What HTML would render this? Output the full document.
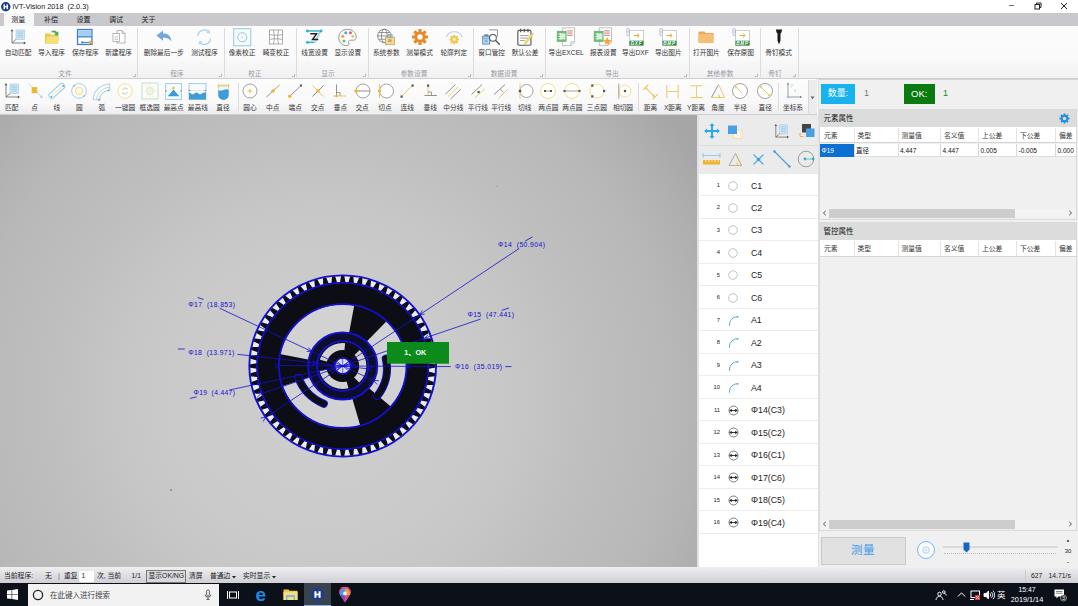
<!DOCTYPE html><html><head><meta charset="utf-8"><title>iVT-Vision 2018</title><style>
*{box-sizing:border-box;margin:0;padding:0}
html,body{width:1078px;height:606px;overflow:hidden;background:#fff}
body{position:relative;font-family:"Liberation Sans","Noto Sans CJK SC",sans-serif;font-size:7px;color:#222}
.abs{position:absolute}
.t{position:absolute;white-space:nowrap;line-height:1}
.c{transform:translateX(-50%)}
#title{left:0;top:0;width:1078px;height:13px;background:#fff}
#tabs{left:0;top:13px;width:1078px;height:13px;background:#c9c9cd}
#ribbon{left:0;top:26px;width:1078px;height:53px;background:linear-gradient(#fcfcfc,#fafafa 60%,#f1f1f3);border-bottom:1px solid #cdcdd1}
#tb2{left:0;top:79px;width:817px;height:36px;background:linear-gradient(#fdfdfd,#f8f8f9 70%,#ededf0);border-bottom:1px solid #cfcfd3;border-right:1px solid #d8d8dc}
#img{left:0;top:115px;width:697px;height:452px;overflow:hidden;background:#c6c6c6}
#lp{left:697px;top:115px;width:121px;height:452px;background:#fff;border-left:2px solid #e2e2e2}
#rp{left:818px;top:79px;width:260px;height:488px;background:#f0f0f0;border-top:1px solid #d4d4d4;border-left:1px solid #e0e0e0}
#status{left:0;top:567px;width:1078px;height:16px;background:linear-gradient(#f0f0f0,#e2e2e6 40%,#cfcfd5)}
#task{left:0;top:583px;width:1078px;height:23px;background:#0b1019}
.rl{font-size:6.7px;color:#333;top:50.3px}
.gl{font-size:6.7px;color:#9a9aa0;top:70.5px}
.sep{position:absolute;width:1px;background:#dcdce0}
.l2{font-size:6.7px;color:#333;top:105.2px}
.li{position:absolute;left:0;width:119px;height:22.47px;border-bottom:1px solid #ececec}
.li .n{position:absolute;font-size:5.800px;color:#222;top:8px;right:98px}
.li .nm{position:absolute;font-size:8.800px;color:#222;left:52px;top:6.500px}
.th{font-size:7px;color:#222}
</style></head><body>
<div id="title" class="abs">
<svg class="abs" style="left:1px;top:2px" width="9.500" height="9.500" viewBox="0 0 10 10"><circle cx="5" cy="5" r="5" fill="#1d3c8c"/><rect x="2.6" y="2.5" width="1.6" height="5" fill="#fff"/><rect x="5.8" y="2.5" width="1.6" height="5" fill="#fff"/><rect x="3.5" y="4.3" width="3" height="1.3" fill="#fff"/></svg>
<span class="t" style="left:12.500px;top:2.800px;font-size:7.300px;color:#111">iVT-Vision 2018&nbsp; (2.0.3)</span>
<span class="t" style="left:1009px;top:1px;font-size:9px;color:#222">–</span>
<svg class="abs" style="left:1034px;top:2px" width="8" height="8" viewBox="0 0 8 8" fill="none" stroke="#222" stroke-width="1"><rect x="1" y="2.5" width="4.5" height="4.5"/><path d="M2.5 2.5V1H7V5.5H5.5"/></svg>
<svg class="abs" style="left:1060px;top:2px" width="8" height="8" viewBox="0 0 8 8" stroke="#222" stroke-width="1"><path d="M1 1L7 7M7 1L1 7"/></svg>
</div>
<div id="tabs" class="abs">
<div class="abs" style="left:4px;top:0;width:29.500px;height:13px;background:#f7f7f8"></div>
<span class="t c" style="left:18.3px;top:3.200px;font-size:7px;color:#222">测量</span>
<span class="t c" style="left:51.0px;top:3.200px;font-size:7px;color:#222">补偿</span>
<span class="t c" style="left:83.5px;top:3.200px;font-size:7px;color:#222">设置</span>
<span class="t c" style="left:116.0px;top:3.200px;font-size:7px;color:#222">调试</span>
<span class="t c" style="left:148.4px;top:3.200px;font-size:7px;color:#222">关于</span>
</div>
<div id="ribbon" class="abs"></div>
<span class="t c rl" style="left:18.0px">自动匹配</span>
<svg class="abs" style="left:9.0px;top:28.2px" width="18.0" height="18.0" viewBox="0 0 18 18"><rect x="7" y="2" width="8.5" height="9.5" fill="#cfe6f4" stroke="#9cc7e4" stroke-width=".6"/>
<path d="M8.5 4h5.5M8.5 5.7h5.5M8.5 7.4h5.5M8.5 9.1h5.5" stroke="#8fbfe0" stroke-width=".6"/>
<path d="M3 2.5V15H15.5M3 15L7 11.5" stroke="#666" stroke-width=".8" fill="none"/>
<path d="M3 1l1.4 2.2H1.6zM17 15l-2.2 1.4v-2.8z" fill="#555"/></svg>
<span class="t c rl" style="left:51.5px">导入程序</span>
<svg class="abs" style="left:42.5px;top:28.2px" width="18.0" height="18.0" viewBox="0 0 18 18"><path d="M2 5.5h5l1.2 1.3H15V16H2z" fill="#e9c94a"/>
<path d="M2 16L4 8.5h12.5L15 16z" fill="#f6e07a"/>
<path d="M7.5 4.5C9 2 12.5 1.8 14 4.2l1.2-1 .3 4.6-4.4-1 1.3-1C11.5 4 9.5 4 7.500 4.5z" fill="#4caf50"/></svg>
<span class="t c rl" style="left:85.3px">保存程序</span>
<svg class="abs" style="left:76.0px;top:28.0px" width="18.5" height="18.5" viewBox="0 0 18 18"><rect x="1.5" y="1.5" width="14" height="14.500" fill="#fff" stroke="#3f7fc4" stroke-width="1.3"/>
<rect x="2.2" y="2.200" width="12.6" height="6" fill="#a9cdf1"/>
<path d="M1.5 8.6h14" stroke="#3f7fc4" stroke-width="1.2"/>
<path d="M6 14h7" stroke="#3f7fc4" stroke-width="1"/>
<circle cx="6" cy="14" r="1" fill="#3f7fc4"/>
<path d="M13 11.800l4 2.200-4 2.200z" fill="#f0a030"/></svg>
<span class="t c rl" style="left:118.5px">新建程序</span>
<svg class="abs" style="left:109.5px;top:28.2px" width="18.0" height="18.0" viewBox="0 0 18 18"><path d="M7 2.500h5l3 3V15H7z" fill="#fff" stroke="#9a9a9a" stroke-width=".7"/>
<path d="M12 2.500v3h3" fill="none" stroke="#9a9a9a" stroke-width=".7"/>
<rect x="3" y="5.500" width="6.500" height="8" fill="#fff" stroke="#9a9a9a" stroke-width=".7"/>
<path d="M4.500 8.500h3.500M4.500 10h3.500M4.500 11.500h3.500" stroke="#b5b5b5" stroke-width=".6"/></svg>
<span class="t c rl" style="left:163.8px">删除最后一步</span>
<svg class="abs" style="left:154.8px;top:28.2px" width="18.0" height="18.0" viewBox="0 0 18 18"><path d="M1.500 7.500L8 2.500v3c5 0 8 2.500 8.500 8-1.800-3-4.500-4-8.500-3.800v3z" fill="#6fa8dc"/></svg>
<span class="t c rl" style="left:204.5px">测试程序</span>
<svg class="abs" style="left:194.2px;top:27.0px" width="20.5" height="20.5" viewBox="0 0 18 18"><path d="M3.500 8a5.500 5.500 0 0 1 9.500-3.600" fill="none" stroke="#a3d5ee" stroke-width="1.100"/><path d="M14.500 10a5.500 5.500 0 0 1-9.500 3.600" fill="none" stroke="#a3d5ee" stroke-width="1.100"/>
<path d="M13.800 2.200v3.200h-3.200zM4.200 15.800v-3.200h3.200z" fill="#a3d5ee"/></svg>
<span class="t c rl" style="left:242.0px">像素校正</span>
<svg class="abs" style="left:231.8px;top:27.0px" width="20.5" height="20.5" viewBox="0 0 18 18"><rect x="1.500" y="1.500" width="15" height="15" fill="#f4fafd" stroke="#8cc4dc" stroke-width=".8"/><circle cx="9" cy="9" r="4" fill="none" stroke="#8cc4dc" stroke-width=".8"/><circle cx="9" cy="9" r=".8" fill="#f2d98a"/></svg>
<span class="t c rl" style="left:276.0px">畸变校正</span>
<svg class="abs" style="left:267.0px;top:28.2px" width="18.0" height="18.0" viewBox="0 0 18 18"><rect x="2.500" y="2" width="13" height="14" fill="#fff" stroke="#8a8a8a" stroke-width=".7"/>
<path d="M6.500 2C7.500 6 7.500 12 6.500 16M11.500 2C10.500 6 10.500 12 11.500 16M2.500 6.500C6 7.500 12 7.500 15.500 6.500M2.500 11.500C6 10.500 12 10.500 15.500 11.500" fill="none" stroke="#8a8a8a" stroke-width=".7"/></svg>
<span class="t c rl" style="left:314.6px">线宽设置</span>
<svg class="abs" style="left:304.4px;top:27.0px" width="20.5" height="20.5" viewBox="0 0 18 18"><path d="M3 3.500H14.500" stroke="#2fb5c8" stroke-width="1.300"/><path d="M14.500 3.500L9.500 13.500" stroke="#9ad8e4" stroke-width="1.600"/><path d="M3.500 13.500H9" stroke="#2fb5c8" stroke-width="1.300"/>
<path d="M5.500 6h5.500l-3.500 5h5" fill="none" stroke="#222" stroke-width="1.300"/>
<circle cx="3" cy="3.500" r="1.300" fill="#2fb5c8"/><circle cx="15" cy="3.500" r="1.300" fill="#2fb5c8"/><circle cx="3" cy="13.500" r="1.300" fill="#2fb5c8"/></svg>
<span class="t c rl" style="left:347.8px">显示设置</span>
<svg class="abs" style="left:337.3px;top:26.7px" width="21.0" height="21.0" viewBox="0 0 18 18"><path d="M9 2C4.500 2 1.500 5 1.500 9s3 7 7 7c2 0 2-1.500 1.500-2.500-.5-1.200.3-2.200 1.700-2.200h2.300c1.500 0 2.500-1 2.500-2.800C16.500 4.500 13 2 9 2z" fill="#fbfbfb" stroke="#8a8f98" stroke-width=".8"/>
<circle cx="5" cy="8" r="1.300" fill="#e8a33d"/><circle cx="7.500" cy="5" r="1.300" fill="#5aa2e0"/><circle cx="11.500" cy="5" r="1.300" fill="#e06060"/><circle cx="13.500" cy="8" r="1.200" fill="#e8c04a"/><circle cx="6" cy="12" r="1.300" fill="#6cc070"/></svg>
<span class="t c rl" style="left:386.3px">系统参数</span>
<svg class="abs" style="left:376.3px;top:27.2px" width="20.0" height="20.0" viewBox="0 0 18 18"><circle cx="7.500" cy="8" r="6" fill="#fff" stroke="#777" stroke-width=".8"/><ellipse cx="7.500" cy="8" rx="2.600" ry="6" fill="none" stroke="#777" stroke-width=".7"/><path d="M1.500 8h12M2.500 5h10M2.500 11h10" stroke="#777" stroke-width=".7"/>
<rect x="8.500" y="9" width="8" height="7" fill="#ecd9a0" stroke="#b59a55" stroke-width=".6"/><rect x="10.500" y="6.800" width="4" height="2.600" fill="none" stroke="#8fa6c8" stroke-width=".8"/><rect x="11" y="11" width="3" height="2.500" fill="#c9a94e"/></svg>
<span class="t c rl" style="left:419.6px">测量模式</span>
<svg class="abs" style="left:410.6px;top:28.2px" width="18.0" height="18.0" viewBox="0 0 18 18"><g fill="#e8892b"><circle cx="9" cy="9" r="5.600"/><g id="gt"><rect x="7.400" y="1" width="3.200" height="16" rx=".5"/></g><rect x="7.400" y="1" width="3.200" height="16" rx=".5" transform="rotate(45 9 9)"/><rect x="7.400" y="1" width="3.200" height="16" rx=".5" transform="rotate(90 9 9)"/><rect x="7.400" y="1" width="3.200" height="16" rx=".5" transform="rotate(135 9 9)"/></g><circle cx="9" cy="9" r="2.700" fill="#fafafa"/></svg>
<span class="t c rl" style="left:453.8px">轮廓判定</span>
<svg class="abs" style="left:443.6px;top:27.0px" width="20.5" height="20.5" viewBox="0 0 18 18"><path d="M2 9A7.500 7.500 0 0 1 16 9" fill="none" stroke="#a8d4ea" stroke-width=".9"/>
<g fill="#f2c84b"><circle cx="9" cy="11" r="3"/><rect x="8.100" y="6.800" width="1.800" height="8.400"/><rect x="8.100" y="6.800" width="1.800" height="8.400" transform="rotate(45 9 11)"/><rect x="8.100" y="6.800" width="1.800" height="8.400" transform="rotate(90 9 11)"/><rect x="8.100" y="6.800" width="1.800" height="8.400" transform="rotate(135 9 11)"/></g><circle cx="9" cy="11" r="1.300" fill="#fafafa"/></svg>
<span class="t c rl" style="left:491.7px">窗口管控</span>
<svg class="abs" style="left:481.4px;top:27.0px" width="20.5" height="20.5" viewBox="0 0 18 18"><path d="M7 2.500h7.500v6" fill="none" stroke="#8a8a8a" stroke-width=".8"/>
<rect x="1.500" y="8" width="6" height="7" fill="#cfe4f4" stroke="#4a86b8" stroke-width=".8"/><path d="M1.500 9.800h6M3 11.500h3M3 13h3" stroke="#4a86b8" stroke-width=".7"/><rect x="3" y="6.500" width="3.500" height="1.500" fill="#4a86b8"/>
<circle cx="10.500" cy="9.500" r="3" fill="#fff" stroke="#555" stroke-width=".9"/><path d="M12.700 11.700L16.500 15.500" stroke="#555" stroke-width="1.200"/></svg>
<span class="t c rl" style="left:525.0px">默认公差</span>
<svg class="abs" style="left:514.8px;top:27.0px" width="20.5" height="20.5" viewBox="0 0 18 18"><rect x="2.500" y="3" width="11.500" height="13" rx="1" fill="#fff" stroke="#555" stroke-width="1"/>
<path d="M5 1.500v3M8.200 1.500v3M11.400 1.500v3" stroke="#555" stroke-width="1"/><path d="M4.500 7.500h7.500M4.500 9.700h7.500M4.500 11.900h4" stroke="#888" stroke-width=".7"/>
<path d="M16.500 6L10 14.500l-2 1 .6-2.200L15.200 5z" fill="#f0d878" stroke="#d8b84a" stroke-width=".4"/></svg>
<span class="t c rl" style="left:566.2px">导出EXCEL</span>
<svg class="abs" style="left:555.2px;top:26.2px" width="22.0" height="22.0" viewBox="0 0 18 18"><path d="M6 1.500h10V13l-3 3H6z" fill="#fff" stroke="#aaa" stroke-width=".6"/><path d="M16 13h-3v3" fill="none" stroke="#aaa" stroke-width=".6"/>
<path d="M10 4h4.500M10 5.800h4.500M10 7.600h4.500" stroke="#c05a5a" stroke-width=".7"/>
<rect x="1.500" y="4" width="8" height="9" fill="#6dbb78"/><rect x="4" y="6" width="4.500" height="5" fill="#d8efd8"/><path d="M3 6.500h2M3 8.500h2M3 10.500h2" stroke="#fff" stroke-width=".8"/></svg>
<span class="t c rl" style="left:603.3px">报表设置</span>
<svg class="abs" style="left:592.3px;top:26.2px" width="22.0" height="22.0" viewBox="0 0 18 18"><path d="M6 1.500h10V13l-3 3H6z" fill="#fff" stroke="#aaa" stroke-width=".6"/><path d="M16 13h-3v3" fill="none" stroke="#aaa" stroke-width=".6"/>
<path d="M10 4h4.500M10 5.800h4.500M10 7.600h4.500" stroke="#c05a5a" stroke-width=".7"/>
<rect x="1.500" y="4" width="8" height="9" fill="#6dbb78"/><rect x="4" y="6" width="4.500" height="5" fill="#d8efd8"/><path d="M3 6.500h2M3 8.500h2M3 10.500h2" stroke="#fff" stroke-width=".8"/><path d="M12.500 9l1 2.300 2.500.2-1.900 1.600.6 2.400-2.200-1.300-2.200 1.300.6-2.400-1.900-1.600 2.500-.2z" fill="#f0a832"/></svg>
<span class="t c rl" style="left:635.4px">导出DXF</span>
<svg class="abs" style="left:626.4px;top:28.2px" width="18.0" height="18.0" viewBox="0 0 18 18"><rect x="3.500" y="2.500" width="14" height="15" fill="#fff" stroke="#b0b0b0" stroke-width=".6"/>
<rect x=".800" y=".400" width="2.600" height="7.200" rx="1.300" fill="#fff" stroke="#8aa0c0" stroke-width=".6"/><path d="M2.100 2v3.500" stroke="#8aa0c0" stroke-width=".5"/>
<path d="M7.500 7.500h5.500M11 5.500L13.200 7.500 11 9.500" fill="none" stroke="#e8b03a" stroke-width="1"/>
<rect x="3.500" y="12.700" width="14" height="4.800" fill="#2a8a3a"/>
<text x="10.500" y="16.700" font-size="4.600" font-weight="bold" font-style="italic" fill="#fff" text-anchor="middle" font-family="Liberation Sans,sans-serif" letter-spacing=".7">DXF</text></svg>
<span class="t c rl" style="left:668.3px">导出图片</span>
<svg class="abs" style="left:659.3px;top:28.2px" width="18.0" height="18.0" viewBox="0 0 18 18"><rect x="3.500" y="2.500" width="14" height="15" fill="#fff" stroke="#b0b0b0" stroke-width=".6"/>
<rect x=".800" y=".400" width="2.600" height="7.200" rx="1.300" fill="#fff" stroke="#8aa0c0" stroke-width=".6"/><path d="M2.100 2v3.500" stroke="#8aa0c0" stroke-width=".5"/>
<path d="M7.500 7.500h5.500M11 5.500L13.200 7.500 11 9.500" fill="none" stroke="#e8b03a" stroke-width="1"/>
<rect x="3.500" y="12.700" width="14" height="4.800" fill="#2a8a3a"/>
<text x="10.500" y="16.700" font-size="4.600" font-weight="bold" font-style="italic" fill="#fff" text-anchor="middle" font-family="Liberation Sans,sans-serif" letter-spacing=".7">BMP</text></svg>
<span class="t c rl" style="left:706.4px">打开图片</span>
<svg class="abs" style="left:697.4px;top:28.2px" width="18.0" height="18.0" viewBox="0 0 18 18"><path d="M1.500 3.500h6l1.200 1.500H16.500V15H1.500z" fill="#e9a85a"/><path d="M1.500 6h15v9H1.500z" fill="#f5bf78"/></svg>
<span class="t c rl" style="left:740.6px">保存原图</span>
<svg class="abs" style="left:731.6px;top:28.2px" width="18.0" height="18.0" viewBox="0 0 18 18"><rect x="3.500" y="2.500" width="14" height="15" fill="#fff" stroke="#b0b0b0" stroke-width=".6"/>
<rect x=".800" y=".400" width="2.600" height="7.200" rx="1.300" fill="#fff" stroke="#8aa0c0" stroke-width=".6"/><path d="M2.100 2v3.500" stroke="#8aa0c0" stroke-width=".5"/>
<path d="M7.500 7.500h5.500M11 5.500L13.200 7.500 11 9.500" fill="none" stroke="#e8b03a" stroke-width="1"/>
<rect x="3.500" y="12.700" width="14" height="4.800" fill="#2a8a3a"/>
<text x="10.500" y="16.700" font-size="4.600" font-weight="bold" font-style="italic" fill="#fff" text-anchor="middle" font-family="Liberation Sans,sans-serif" letter-spacing=".7">BMP</text></svg>
<span class="t c rl" style="left:778.6px">骨钉模式</span>
<svg class="abs" style="left:769.6px;top:28.2px" width="18.0" height="18.0" viewBox="0 0 18 18"><path d="M5.800 1.500h6.400l-.9 3.200-.8.900V12.500l-1.500 4L7.500 12.500V5.600l-.8-.9z" fill="#1a1a1a"/></svg>
<div class="sep" style="left:137.0px;top:28px;height:49px"></div>
<div class="sep" style="left:223.5px;top:28px;height:49px"></div>
<div class="sep" style="left:296.4px;top:28px;height:49px"></div>
<div class="sep" style="left:367.6px;top:28px;height:49px"></div>
<div class="sep" style="left:472.5px;top:28px;height:49px"></div>
<div class="sep" style="left:544.5px;top:28px;height:49px"></div>
<div class="sep" style="left:688.5px;top:28px;height:49px"></div>
<div class="sep" style="left:759.7px;top:28px;height:49px"></div>
<div class="sep" style="left:797.5px;top:28px;height:49px"></div>
<svg class="abs" style="left:131.5px;top:73px" width="4" height="4" viewBox="0 0 4 4"><path d="M3.500 1v2.500H1" fill="none" stroke="#a0a0a8" stroke-width=".7"/></svg>
<svg class="abs" style="left:218.0px;top:73px" width="4" height="4" viewBox="0 0 4 4"><path d="M3.500 1v2.500H1" fill="none" stroke="#a0a0a8" stroke-width=".7"/></svg>
<svg class="abs" style="left:290.9px;top:73px" width="4" height="4" viewBox="0 0 4 4"><path d="M3.500 1v2.500H1" fill="none" stroke="#a0a0a8" stroke-width=".7"/></svg>
<svg class="abs" style="left:362.1px;top:73px" width="4" height="4" viewBox="0 0 4 4"><path d="M3.500 1v2.500H1" fill="none" stroke="#a0a0a8" stroke-width=".7"/></svg>
<svg class="abs" style="left:467.0px;top:73px" width="4" height="4" viewBox="0 0 4 4"><path d="M3.500 1v2.500H1" fill="none" stroke="#a0a0a8" stroke-width=".7"/></svg>
<svg class="abs" style="left:539.0px;top:73px" width="4" height="4" viewBox="0 0 4 4"><path d="M3.500 1v2.500H1" fill="none" stroke="#a0a0a8" stroke-width=".7"/></svg>
<svg class="abs" style="left:683.0px;top:73px" width="4" height="4" viewBox="0 0 4 4"><path d="M3.500 1v2.500H1" fill="none" stroke="#a0a0a8" stroke-width=".7"/></svg>
<svg class="abs" style="left:754.2px;top:73px" width="4" height="4" viewBox="0 0 4 4"><path d="M3.500 1v2.500H1" fill="none" stroke="#a0a0a8" stroke-width=".7"/></svg>
<svg class="abs" style="left:792.0px;top:73px" width="4" height="4" viewBox="0 0 4 4"><path d="M3.500 1v2.500H1" fill="none" stroke="#a0a0a8" stroke-width=".7"/></svg>
<span class="t c gl" style="left:65px">文件</span>
<span class="t c gl" style="left:177px">程序</span>
<span class="t c gl" style="left:255px">校正</span>
<span class="t c gl" style="left:328px">显示</span>
<span class="t c gl" style="left:414px">参数设置</span>
<span class="t c gl" style="left:504px">数据设置</span>
<span class="t c gl" style="left:612px">导出</span>
<span class="t c gl" style="left:720px">其他参数</span>
<span class="t c gl" style="left:775px">骨钉</span>
<div id="tb2" class="abs"></div>
<span class="t c l2" style="left:11.8px">匹配</span>
<svg class="abs" style="left:2.8px;top:82.2px" width="18.0" height="18.0" viewBox="0 0 18 18"><rect x="7" y="2" width="8.5" height="9.5" fill="#cfe6f4" stroke="#9cc7e4" stroke-width=".6"/>
<path d="M8.5 4h5.5M8.5 5.7h5.5M8.5 7.4h5.5M8.5 9.1h5.5" stroke="#8fbfe0" stroke-width=".6"/>
<path d="M3 2.5V15H15.5M3 15L7 11.5" stroke="#666" stroke-width=".8" fill="none"/>
<path d="M3 1l1.4 2.2H1.6zM17 15l-2.2 1.4v-2.8z" fill="#555"/></svg>
<span class="t c l2" style="left:34.6px">点</span>
<svg class="abs" style="left:24.6px;top:81.2px" width="20.0" height="20.0" viewBox="0 0 18 18"><path d="M3 2L15.500 15" stroke="#a8d4ea" stroke-width=".8"/><path d="M16 15.500l-3-.8 2.200-2.200z" fill="#a8d4ea"/><rect x="6" y="5.500" width="5" height="5.500" fill="#f0b830"/></svg>
<span class="t c l2" style="left:56.9px">线</span>
<svg class="abs" style="left:46.9px;top:81.2px" width="20.0" height="20.0" viewBox="0 0 18 18"><rect x="-1" y="6.300" width="17" height="5" rx="2" fill="#fff" stroke="#8ecbe8" stroke-width=".9" transform="rotate(-42 9 9) translate(1.500 0)"/><path d="M4.500 13L13.500 5" stroke="#f3d9a0" stroke-width=".9"/><circle cx="4" cy="14" r=".8" fill="#5a9fd0"/><circle cx="14.500" cy="4.500" r=".8" fill="#5a9fd0"/></svg>
<span class="t c l2" style="left:79.4px">圆</span>
<svg class="abs" style="left:70.4px;top:82.2px" width="18.0" height="18.0" viewBox="0 0 18 18"><circle cx="9" cy="9" r="7.300" fill="#fff" stroke="#8ecbe8" stroke-width=".9"/><circle cx="9" cy="9" r="3.800" fill="#fdf6e0" stroke="#f3d48a" stroke-width=".9"/><circle cx="4" cy="4" r=".8" fill="#5a9fd0"/><circle cx="14" cy="14" r=".8" fill="#5a9fd0"/></svg>
<span class="t c l2" style="left:101.8px">弧</span>
<svg class="abs" style="left:91.3px;top:80.7px" width="21.0" height="21.0" viewBox="0 0 18 18"><path d="M2 16C2 8.500 8 3 16 2.500V8C11 8.500 7.500 11 7.500 16z" fill="#fff" stroke="#a8d4ea" stroke-width=".9"/><path d="M4.700 16C5 10.500 10 5.800 16 5.300" fill="none" stroke="#c8c8c8" stroke-width=".8"/><circle cx="15" cy="8" r=".8" fill="#5a9fd0"/><circle cx="7" cy="16" r=".8" fill="#5a9fd0"/></svg>
<span class="t c l2" style="left:125.1px">一键圆</span>
<svg class="abs" style="left:116.1px;top:82.2px" width="18.0" height="18.0" viewBox="0 0 18 18"><circle cx="9" cy="9" r="7.300" fill="#fffdf4" stroke="#f0dc8c" stroke-width=".9"/><path d="M6.800 8a2.300 2.300 0 0 1 4-1.200M11.200 10a2.300 2.300 0 0 1-4 1.200" fill="none" stroke="#9ccbe8" stroke-width=".9"/><path d="M11.500 5.500v1.800H9.700zM6.500 12.500v-1.800h1.800z" fill="#9ccbe8"/></svg>
<span class="t c l2" style="left:149.6px">框选圆</span>
<svg class="abs" style="left:140.6px;top:82.2px" width="18.0" height="18.0" viewBox="0 0 18 18"><rect x="1" y="1" width="16" height="16" fill="#fbfdf8" stroke="#b8d4c0" stroke-width=".8"/><circle cx="9" cy="9" r="3.500" fill="none" stroke="#b8d8ea" stroke-width=".7"/><path d="M9 1v16M1 9h16M5 3l8 12M13 3L5 15" stroke="#f3e4c0" stroke-width=".6"/></svg>
<span class="t c l2" style="left:173.7px">最高点</span>
<svg class="abs" style="left:164.2px;top:81.7px" width="19.0" height="19.0" viewBox="0 0 18 18"><rect x="1.500" y="1.500" width="15" height="15" fill="#f6fbfe" stroke="#9ccbe8" stroke-width=".9"/><circle cx="9" cy="5.800" r="1.200" fill="#f0b830"/><path d="M3.500 13.500L9 7l5.500 6.500z" fill="#3d9bd8"/><path d="M1 8.500h2M15 8.500h2" stroke="#8a8a8a" stroke-width=".8"/></svg>
<span class="t c l2" style="left:197.9px">最高线</span>
<svg class="abs" style="left:188.4px;top:81.7px" width="19.0" height="19.0" viewBox="0 0 18 18"><rect x="1" y="1.500" width="16" height="15" fill="#f6fbfe" stroke="#9ccbe8" stroke-width=".9"/><path d="M1 10c1.500 0 2 1.800 3.500 1.800S6.500 10 8 10s2 1.800 3.500 1.800S13.500 10 15 10h2v6.500H1z" fill="#3d9bd8"/><path d="M1 8h16" stroke="#f3d9c0" stroke-width=".7"/><path d="M0.500 8h2M15.500 8h2" stroke="#8a8a8a" stroke-width=".8"/></svg>
<span class="t c l2" style="left:223.0px">直径</span>
<svg class="abs" style="left:213.5px;top:81.7px" width="19.0" height="19.0" viewBox="0 0 18 18"><path d="M4 2h10v10.500a5 4.500 0 0 1-10 0z" fill="#3d9bd8"/><path d="M4 2h10v5.500c-1.500-.8-3-.8-5 0s-3.500.8-5 0z" fill="#eef6fc"/><path d="M4 3.500h10" stroke="#f0c850" stroke-width="1.200"/><path d="M4 2v4M14 2v4" stroke="#f0c850" stroke-width=".9"/></svg>
<span class="t c l2" style="left:250.0px">圆心</span>
<svg class="abs" style="left:241.0px;top:82.2px" width="18.0" height="18.0" viewBox="0 0 18 18"><circle cx="9" cy="9" r="7" fill="#fff" stroke="#8a8a8a" stroke-width=".8"/><path d="M9 6.500v5M6.500 9h5" stroke="#f0b830" stroke-width=".9"/></svg>
<span class="t c l2" style="left:272.7px">中点</span>
<svg class="abs" style="left:263.7px;top:82.2px" width="18.0" height="18.0" viewBox="0 0 18 18"><path d="M2.500 15L15.500 3" stroke="#777" stroke-width=".8"/><path d="M15.500 3L12 6" stroke="#e8c65a" stroke-width=".8"/><circle cx="9" cy="9" r="1.800" fill="#f0b830"/></svg>
<span class="t c l2" style="left:295.2px">端点</span>
<svg class="abs" style="left:286.2px;top:82.2px" width="18.0" height="18.0" viewBox="0 0 18 18"><path d="M3.500 14.500L15 3.500" stroke="#777" stroke-width=".8"/><rect x="14" y="2.500" width="2" height="2" fill="#555"/><circle cx="3.800" cy="14.200" r="1.800" fill="#f0b830"/></svg>
<span class="t c l2" style="left:317.8px">交点</span>
<svg class="abs" style="left:308.8px;top:82.2px" width="18.0" height="18.0" viewBox="0 0 18 18"><path d="M3.500 3.500L14.500 14.500" stroke="#e8c65a" stroke-width=".9"/><path d="M14.500 3.500L3.500 14.500" stroke="#777" stroke-width=".9"/><circle cx="9" cy="9" r="1.800" fill="#f0b830"/></svg>
<span class="t c l2" style="left:340.4px">垂点</span>
<svg class="abs" style="left:331.4px;top:82.2px" width="18.0" height="18.0" viewBox="0 0 18 18"><path d="M5.500 2.500V14" stroke="#777" stroke-width=".8"/><path d="M2 14H15.500" stroke="#e8c65a" stroke-width=".9"/><path d="M5.500 10.500h3.500V14" fill="none" stroke="#777" stroke-width=".7"/><circle cx="5.500" cy="14" r="1.300" fill="#f0b830"/></svg>
<span class="t c l2" style="left:362.1px">交点</span>
<svg class="abs" style="left:353.1px;top:82.2px" width="18.0" height="18.0" viewBox="0 0 18 18"><circle cx="10" cy="9" r="7" fill="#fff" stroke="#8a8a8a" stroke-width=".8"/><path d="M2 9H17" stroke="#777" stroke-width=".8"/><circle cx="3" cy="9" r="1.700" fill="#f0b830"/><path d="M4.500 9l2-1.200v2.400z" fill="#f0b830"/></svg>
<span class="t c l2" style="left:385.0px">切点</span>
<svg class="abs" style="left:376.0px;top:82.2px" width="18.0" height="18.0" viewBox="0 0 18 18"><circle cx="10.500" cy="9" r="7" fill="#fff" stroke="#8a8a8a" stroke-width=".8"/><path d="M3.500 2v14" stroke="#e8c65a" stroke-width=".9"/><circle cx="3.500" cy="9" r="1.700" fill="#f0b830"/></svg>
<span class="t c l2" style="left:407.2px">连线</span>
<svg class="abs" style="left:398.2px;top:82.2px" width="18.0" height="18.0" viewBox="0 0 18 18"><path d="M3.500 14.500L14.500 3.500" stroke="#e8c65a" stroke-width=".9"/><rect x="2.500" y="13.500" width="2.200" height="2.200" fill="#555"/><rect x="13.500" y="2.500" width="2.200" height="2.200" fill="#555"/></svg>
<span class="t c l2" style="left:430.2px">垂线</span>
<svg class="abs" style="left:421.2px;top:82.2px" width="18.0" height="18.0" viewBox="0 0 18 18"><path d="M7 4V13.500" stroke="#e8c65a" stroke-width=".9"/><path d="M3.500 13.500H16" stroke="#777" stroke-width=".8"/><path d="M7 10h3.500v3.500" fill="none" stroke="#777" stroke-width=".7"/><rect x="6" y="2.500" width="2.200" height="2.200" fill="#555"/></svg>
<span class="t c l2" style="left:453.3px">中分线</span>
<svg class="abs" style="left:444.3px;top:82.2px" width="18.0" height="18.0" viewBox="0 0 18 18"><path d="M1.500 12L11.500 2.500" stroke="#777" stroke-width=".8"/><path d="M4 14.500L14 5" stroke="#e8c65a" stroke-width=".9"/><path d="M6.500 17L16.500 7.500" stroke="#777" stroke-width=".8"/></svg>
<span class="t c l2" style="left:477.8px">平行线</span>
<svg class="abs" style="left:468.8px;top:82.2px" width="18.0" height="18.0" viewBox="0 0 18 18"><path d="M2.500 12.500L13 2.500" stroke="#777" stroke-width=".8"/><path d="M6 16L16 6.500" stroke="#e8c65a" stroke-width=".9"/><rect x="8.500" y="9" width="2.200" height="2.200" fill="#555"/></svg>
<span class="t c l2" style="left:501.2px">平行线</span>
<svg class="abs" style="left:492.2px;top:82.2px" width="18.0" height="18.0" viewBox="0 0 18 18"><path d="M2 12.500L13 2.500" stroke="#777" stroke-width=".8"/><path d="M6.500 16.500L16 7" stroke="#e8c65a" stroke-width=".9"/><path d="M8.500 7L11.500 10.500" stroke="#777" stroke-width=".7"/></svg>
<span class="t c l2" style="left:524.7px">切线</span>
<svg class="abs" style="left:515.7px;top:82.2px" width="18.0" height="18.0" viewBox="0 0 18 18"><circle cx="10.500" cy="9" r="6.500" fill="#fff" stroke="#8a8a8a" stroke-width=".8"/><path d="M4 1.500V17" stroke="#e8c65a" stroke-width=".9"/><rect x="2.800" y="7.800" width="2.400" height="2.400" fill="#555"/></svg>
<span class="t c l2" style="left:548.3px">两点圆</span>
<svg class="abs" style="left:539.3px;top:82.2px" width="18.0" height="18.0" viewBox="0 0 18 18"><circle cx="9" cy="9" r="7.500" fill="#fffef8" stroke="#f0dc8c" stroke-width=".9"/><path d="M6 9h6" stroke="#8a8a8a" stroke-width=".8"/><rect x="5" y="8" width="2" height="2" fill="#555"/><rect x="11" y="8" width="2" height="2" fill="#555"/></svg>
<span class="t c l2" style="left:572.3px">两点圆</span>
<svg class="abs" style="left:563.3px;top:82.2px" width="18.0" height="18.0" viewBox="0 0 18 18"><circle cx="9" cy="9" r="7.500" fill="#fffef8" stroke="#f0dc8c" stroke-width=".9"/><path d="M1.500 9h15" stroke="#8a8a8a" stroke-width=".8"/><rect x=".5" y="8" width="2" height="2" fill="#555"/><rect x="15.500" y="8" width="2" height="2" fill="#555"/></svg>
<span class="t c l2" style="left:596.8px">三点圆</span>
<svg class="abs" style="left:587.8px;top:82.2px" width="18.0" height="18.0" viewBox="0 0 18 18"><circle cx="9" cy="9" r="7" fill="#fffef8" stroke="#f0dc8c" stroke-width=".9"/><rect x="3.200" y="2.500" width="2.200" height="2.200" fill="#555"/><rect x="3.200" y="13.300" width="2.200" height="2.200" fill="#555"/><rect x="15" y="7.900" width="2.200" height="2.200" fill="#555"/></svg>
<span class="t c l2" style="left:623.0px">相切圆</span>
<svg class="abs" style="left:614.0px;top:82.2px" width="18.0" height="18.0" viewBox="0 0 18 18"><circle cx="11" cy="9" r="6" fill="#fffef8" stroke="#f0dc8c" stroke-width=".9"/><path d="M4.800 1.500V16.500" stroke="#8a8a8a" stroke-width=".8"/><rect x="9.900" y="7.900" width="2.200" height="2.200" fill="#555"/></svg>
<span class="t c l2" style="left:650.6px">距离</span>
<svg class="abs" style="left:641.1px;top:81.7px" width="19.0" height="19.0" viewBox="0 0 18 18"><path d="M4 5L13 14" stroke="#e8c65a" stroke-width="1"/><path d="M2 7.500L7 2.500M11 16.500L16 11.500" stroke="#e8c65a" stroke-width="1"/><path d="M4 5l2.500.5-2 2zM13 14l-2.500-.500 2-2z" fill="#e8c65a"/></svg>
<span class="t c l2" style="left:672.8px">X距离</span>
<svg class="abs" style="left:664.3px;top:82.7px" width="17.0" height="17.0" viewBox="0 0 18 18"><path d="M3 2V16M15 2V16" stroke="#e8c65a" stroke-width="1"/><path d="M3 9H15" stroke="#e8c65a" stroke-width=".9"/></svg>
<span class="t c l2" style="left:696.0px">Y距离</span>
<svg class="abs" style="left:687.5px;top:82.7px" width="17.0" height="17.0" viewBox="0 0 18 18"><path d="M2.500 3H15.500M2.500 15.500H15.500" stroke="#e8c65a" stroke-width="1"/><path d="M9 3V15.500" stroke="#e8c65a" stroke-width=".9"/></svg>
<span class="t c l2" style="left:718.0px">角度</span>
<svg class="abs" style="left:709.0px;top:82.2px" width="18.0" height="18.0" viewBox="0 0 18 18"><path d="M2.500 15.500L9.500 2.500" stroke="#777" stroke-width=".8" fill="none"/><path d="M2.500 15.500H15.500L9.500 2.500" stroke="#e8c65a" stroke-width=".9" fill="none"/><path d="M10.500 15.500a4 4 0 0 0-1.200-3.200" fill="none" stroke="#e8a030" stroke-width=".8"/></svg>
<span class="t c l2" style="left:740.3px">半径</span>
<svg class="abs" style="left:731.3px;top:82.2px" width="18.0" height="18.0" viewBox="0 0 18 18"><circle cx="9" cy="9" r="7.500" fill="#fff" stroke="#8a8a8a" stroke-width=".8"/><path d="M10.500 10.500L4.500 4.500" stroke="#e8c65a" stroke-width="1"/><path d="M3.800 3.800l2.800.8-2 2z" fill="#e8c65a"/></svg>
<span class="t c l2" style="left:765.2px">直径</span>
<svg class="abs" style="left:756.2px;top:82.2px" width="18.0" height="18.0" viewBox="0 0 18 18"><circle cx="9" cy="9" r="7.500" fill="#fff" stroke="#8a8a8a" stroke-width=".8"/><path d="M13.500 13.500L4.500 4.500" stroke="#e8c65a" stroke-width="1"/><path d="M3.800 3.800l2.800.8-2 2zM14.200 14.200l-2.800-.800 2-2z" fill="#e8c65a"/></svg>
<span class="t c l2" style="left:793.0px">坐标系</span>
<svg class="abs" style="left:784.0px;top:82.2px" width="18.0" height="18.0" viewBox="0 0 18 18"><path d="M4 2V15H17" stroke="#888" stroke-width=".8" fill="none"/><path d="M4 .5l1.200 2H2.800zM18 15l-2 1.200v-2.400z" fill="#777"/><circle cx="4" cy="15" r="1" fill="#fff" stroke="#5a9fd0" stroke-width=".6"/>
<text x="6" y="6" font-size="4.500" fill="#8ecbe8" font-family="Liberation Sans,sans-serif">Y</text><text x="10" y="10" font-size="4.500" fill="#8ecbe8" font-family="Liberation Sans,sans-serif">x</text></svg>
<div class="sep" style="left:237.9px;top:83px;height:28px"></div>
<div class="sep" style="left:637.6px;top:83px;height:28px"></div>
<div class="sep" style="left:778.4px;top:83px;height:28px"></div>
<div class="abs" style="left:807.5px;top:80px;width:9px;height:33px;background:#ececee;border-left:1px solid #d8d8dc"></div>
<svg class="abs" style="left:810px;top:96px" width="5" height="4" viewBox="0 0 5 4"><path d="M.500 .500h4L2.500 3.200z" fill="#666"/></svg>
<div id="img" class="abs"><svg class="abs" style="left:0;top:0" width="697" height="455" viewBox="0 115 697 455"><defs><radialGradient id="bg" gradientUnits="userSpaceOnUse" cx="320" cy="400" r="450"><stop offset="0" stop-color="#cecece"/><stop offset="0.33" stop-color="#cacaca"/><stop offset="0.45" stop-color="#c6c6c6"/><stop offset="0.59" stop-color="#bfbfbf"/><stop offset="0.67" stop-color="#bcbcbc"/><stop offset="0.78" stop-color="#b8b8b8"/><stop offset="0.85" stop-color="#b3b3b3"/><stop offset="0.9" stop-color="#afafaf"/><stop offset="1" stop-color="#a6a6a6"/></radialGradient><linearGradient id="tg" x1="0" y1="0" x2="0" y2="1"><stop offset="0" stop-color="#8e8e8e" stop-opacity=".28"/><stop offset="1" stop-color="#8e8e8e" stop-opacity="0"/></linearGradient><filter id="bl"><feGaussianBlur stdDeviation="0.6"/></filter></defs><rect x="0" y="115" width="697" height="455" fill="url(#bg)"/><g transform="translate(342.7 366.0) scale(1.008 0.978)"><g filter="url(#bl)"><circle r="92.0" fill="#0b0b14"/><path d="M92.79 1.46L92.48 7.64L85.22 5.61L85.36 2.77zM92.20 10.55L91.29 16.67L84.25 13.94L84.67 11.12zM90.72 19.53L89.22 25.54L82.48 22.13L83.18 19.37zM88.37 28.33L86.28 34.16L79.92 30.11L80.88 27.42zM85.17 36.86L82.52 42.45L76.58 37.80L77.80 35.22zM81.15 45.03L77.96 50.34L72.51 45.12L73.97 42.68zM76.34 52.76L72.65 57.74L67.74 52.01L69.43 49.72zM70.80 59.99L66.64 64.58L62.31 58.40L64.23 56.29zM64.58 66.64L59.99 70.80L56.29 64.23L58.40 62.31zM57.74 72.65L52.76 76.34L49.72 69.43L52.01 67.74zM50.34 77.96L45.03 81.15L42.68 73.97L45.12 72.51zM42.45 82.52L36.86 85.17L35.22 77.80L37.80 76.58zM34.16 86.28L28.33 88.37L27.42 80.88L30.11 79.92zM25.54 89.22L19.53 90.72L19.37 83.18L22.13 82.48zM16.67 91.29L10.55 92.20L11.12 84.67L13.94 84.25zM7.64 92.48L1.46 92.79L2.77 85.36L5.61 85.22zM-1.46 92.79L-7.64 92.48L-5.61 85.22L-2.77 85.36zM-10.55 92.20L-16.67 91.29L-13.94 84.25L-11.12 84.67zM-19.53 90.72L-25.54 89.22L-22.13 82.48L-19.37 83.18zM-28.33 88.37L-34.16 86.28L-30.11 79.92L-27.42 80.88zM-36.86 85.17L-42.45 82.52L-37.80 76.58L-35.22 77.80zM-45.03 81.15L-50.34 77.96L-45.12 72.51L-42.68 73.97zM-52.76 76.34L-57.74 72.65L-52.01 67.74L-49.72 69.43zM-59.99 70.80L-64.58 66.64L-58.40 62.31L-56.29 64.23zM-66.64 64.58L-70.80 59.99L-64.23 56.29L-62.31 58.40zM-72.65 57.74L-76.34 52.76L-69.43 49.72L-67.74 52.01zM-77.96 50.34L-81.15 45.03L-73.97 42.68L-72.51 45.12zM-82.52 42.45L-85.17 36.86L-77.80 35.22L-76.58 37.80zM-86.28 34.16L-88.37 28.33L-80.88 27.42L-79.92 30.11zM-89.22 25.54L-90.72 19.53L-83.18 19.37L-82.48 22.13zM-91.29 16.67L-92.20 10.55L-84.67 11.12L-84.25 13.94zM-92.48 7.64L-92.79 1.46L-85.36 2.77L-85.22 5.61zM-92.79 -1.46L-92.48 -7.64L-85.22 -5.61L-85.36 -2.77zM-92.20 -10.55L-91.29 -16.67L-84.25 -13.94L-84.67 -11.12zM-90.72 -19.53L-89.22 -25.54L-82.48 -22.13L-83.18 -19.37zM-88.37 -28.33L-86.28 -34.16L-79.92 -30.11L-80.88 -27.42zM-85.17 -36.86L-82.52 -42.45L-76.58 -37.80L-77.80 -35.22zM-81.15 -45.03L-77.96 -50.34L-72.51 -45.12L-73.97 -42.68zM-76.34 -52.76L-72.65 -57.74L-67.74 -52.01L-69.43 -49.72zM-70.80 -59.99L-66.64 -64.58L-62.31 -58.40L-64.23 -56.29zM-64.58 -66.64L-59.99 -70.80L-56.29 -64.23L-58.40 -62.31zM-57.74 -72.65L-52.76 -76.34L-49.72 -69.43L-52.01 -67.74zM-50.34 -77.96L-45.03 -81.15L-42.68 -73.97L-45.12 -72.51zM-42.45 -82.52L-36.86 -85.17L-35.22 -77.80L-37.80 -76.58zM-34.16 -86.28L-28.33 -88.37L-27.42 -80.88L-30.11 -79.92zM-25.54 -89.22L-19.53 -90.72L-19.37 -83.18L-22.13 -82.48zM-16.67 -91.29L-10.55 -92.20L-11.12 -84.67L-13.94 -84.25zM-7.64 -92.48L-1.46 -92.79L-2.77 -85.36L-5.61 -85.22zM1.46 -92.79L7.64 -92.48L5.61 -85.22L2.77 -85.36zM10.55 -92.20L16.67 -91.29L13.94 -84.25L11.12 -84.67zM19.53 -90.72L25.54 -89.22L22.13 -82.48L19.37 -83.18zM28.33 -88.37L34.16 -86.28L30.11 -79.92L27.42 -80.88zM36.86 -85.17L42.45 -82.52L37.80 -76.58L35.22 -77.80zM45.03 -81.15L50.34 -77.96L45.12 -72.51L42.68 -73.97zM52.76 -76.34L57.74 -72.65L52.01 -67.74L49.72 -69.43zM59.99 -70.80L64.58 -66.64L58.40 -62.31L56.29 -64.23zM66.64 -64.58L70.80 -59.99L64.23 -56.29L62.31 -58.40zM72.65 -57.74L76.34 -52.76L69.43 -49.72L67.74 -52.01zM77.96 -50.34L81.15 -45.03L73.97 -42.68L72.51 -45.12zM82.52 -42.45L85.17 -36.86L77.80 -35.22L76.58 -37.80zM86.28 -34.16L88.37 -28.33L80.88 -27.42L79.92 -30.11zM89.22 -25.54L90.72 -19.53L83.18 -19.37L82.48 -22.13zM91.29 -16.67L92.20 -10.55L84.67 -11.12L84.25 -13.94zM92.48 -7.64L92.79 -1.46L85.36 -2.77L85.22 -5.61z" fill="#ececf0"/><circle r="63.0" fill="#d2d2d2"/><path d="M-28.4 9.8L-61.5 21.2A65.0 65.0 0 0 1 -63.8 -12.4L-29.4 -5.7z" fill="#0b0b14"/><path d="M5.5 -29.5L11.8 -63.9A65.0 65.0 0 0 1 44.7 -47.1L20.7 -21.8z" fill="#0b0b14"/><path d="M22.6 19.7L49.1 42.6A65.0 65.0 0 0 1 17.9 62.5L8.3 28.8z" fill="#0b0b14"/><path d="M-43.9 11.8A45.5 45.5 0 0 0 -18.8 38.6" fill="none" stroke="#1410d0" stroke-width="8.2" stroke-linecap="round"/><path d="M34.2 30.8A46.0 46.0 0 0 0 42.8 -7.6" fill="none" stroke="#1410d0" stroke-width="8.2" stroke-linecap="round"/><path d="M-43.9 11.8A45.5 45.5 0 0 0 -18.8 38.6" fill="none" stroke="#0b0b14" stroke-width="6.2" stroke-linecap="round"/><path d="M34.2 30.8A46.0 46.0 0 0 0 42.8 -7.6" fill="none" stroke="#0b0b14" stroke-width="6.2" stroke-linecap="round"/><circle r="29" fill="none" stroke="#0b0b14" stroke-width="11"/><path d="M-11.7 2.5L-26.4 5.6A27.0 27.0 0 0 1 -26.0 -7.4L-11.5 -3.3z" fill="#0b0b14"/><path d="M1.3 -11.9L2.8 -26.9A27.0 27.0 0 0 1 19.4 -18.8L8.6 -8.3z" fill="#0b0b14"/><path d="M8.3 8.6L18.8 19.4A27.0 27.0 0 0 1 6.5 26.2L2.9 11.6z" fill="#0b0b14"/><circle r="16.3" fill="#0b0b14"/><circle r="7.800" fill="#dcdcf0"/></g><circle r="92.6" fill="none" stroke="#1410d0" stroke-width="1.9"/><circle r="85.0" fill="none" stroke="#1410d0" stroke-width="1.7"/><circle r="63.3" fill="none" stroke="#1410d0" stroke-width="1.8"/><circle r="34.3" fill="none" stroke="#1410d0" stroke-width="1.9"/><circle r="25.4" fill="none" stroke="#1410d0" stroke-width="1.8"/><circle r="8.1" fill="none" stroke="#1410d0" stroke-width="1.6"/><circle r="30" fill="none" stroke="#1410d0" stroke-width="8" opacity=".12"/><path d="M-8 0H8M0 -8V8M-6 -5L6 5M-6 5L6 -5" stroke="#1410d0" stroke-width=".6"/></g><path d="M518.9 248.6L265.7 417.3" stroke="#1410d0" stroke-width="0.8" fill="none"/><path d="M419.7 314.7L422.3 310.4" stroke="#1410d0" stroke-width="0.8" fill="none"/><path d="M419.7 314.7L424.6 314.0" stroke="#1410d0" stroke-width="0.8" fill="none"/><path d="M265.7 417.3L263.1 421.6" stroke="#1410d0" stroke-width="0.8" fill="none"/><path d="M265.7 417.3L260.8 418.0" stroke="#1410d0" stroke-width="0.8" fill="none"/><path d="M480.5 319.1L260.7 393.9" stroke="#1410d0" stroke-width="0.8" fill="none"/><path d="M424.7 338.1L428.3 334.6" stroke="#1410d0" stroke-width="0.8" fill="none"/><path d="M424.7 338.1L429.7 338.6" stroke="#1410d0" stroke-width="0.8" fill="none"/><path d="M260.7 393.9L257.1 397.4" stroke="#1410d0" stroke-width="0.8" fill="none"/><path d="M260.7 393.9L255.7 393.4" stroke="#1410d0" stroke-width="0.8" fill="none"/><path d="M450.8 366.6L279.5 365.6" stroke="#1410d0" stroke-width="0.8" fill="none"/><path d="M405.9 366.4L410.4 364.3" stroke="#1410d0" stroke-width="0.8" fill="none"/><path d="M405.9 366.4L410.4 368.5" stroke="#1410d0" stroke-width="0.8" fill="none"/><path d="M279.5 365.6L275.0 367.7" stroke="#1410d0" stroke-width="0.8" fill="none"/><path d="M279.5 365.6L275.0 363.5" stroke="#1410d0" stroke-width="0.8" fill="none"/><path d="M219.5 308.2L373.8 380.6" stroke="#1410d0" stroke-width="0.8" fill="none"/><path d="M311.6 351.4L306.6 351.4" stroke="#1410d0" stroke-width="0.8" fill="none"/><path d="M311.6 351.4L308.4 347.6" stroke="#1410d0" stroke-width="0.8" fill="none"/><path d="M373.8 380.6L378.8 380.6" stroke="#1410d0" stroke-width="0.8" fill="none"/><path d="M373.8 380.6L377.0 384.4" stroke="#1410d0" stroke-width="0.8" fill="none"/><path d="M237.3 354.3L368.1 368.8" stroke="#1410d0" stroke-width="0.8" fill="none"/><path d="M317.3 363.2L312.5 364.8" stroke="#1410d0" stroke-width="0.8" fill="none"/><path d="M317.3 363.2L313.0 360.6" stroke="#1410d0" stroke-width="0.8" fill="none"/><path d="M368.1 368.8L372.9 367.2" stroke="#1410d0" stroke-width="0.8" fill="none"/><path d="M368.1 368.8L372.4 371.4" stroke="#1410d0" stroke-width="0.8" fill="none"/><path d="M229.4 390.0L350.6 364.3" stroke="#1410d0" stroke-width="0.8" fill="none"/><path d="M334.8 367.7L330.8 370.7" stroke="#1410d0" stroke-width="0.8" fill="none"/><path d="M334.8 367.7L329.9 366.6" stroke="#1410d0" stroke-width="0.8" fill="none"/><path d="M350.6 364.3L354.6 361.3" stroke="#1410d0" stroke-width="0.8" fill="none"/><path d="M350.6 364.3L355.5 365.4" stroke="#1410d0" stroke-width="0.8" fill="none"/><path d="M505.3 366.6L511.5 366.6" stroke="#1410d0" stroke-width="0.8" fill="none"/><path d="M177.9 349.0L184.8 349.0" stroke="#1410d0" stroke-width="0.8" fill="none"/><path d="M189.8 398.4L196.7 396.9" stroke="#1410d0" stroke-width="0.8" fill="none"/><path d="M525.1 241.1L532.5 236.9" stroke="#1410d0" stroke-width="0.8" fill="none"/><path d="M501.6 310.4L509.0 308.0" stroke="#1410d0" stroke-width="0.8" fill="none"/><path d="M197.7 297.5L203.6 299.5" stroke="#1410d0" stroke-width="0.8" fill="none"/><text x="497.9" y="247.3" textLength="47.0" font-family="Liberation Sans,sans-serif" font-size="6.800" fill="#1410d0" lengthAdjust="spacing">Φ14&#160;&#160;(50.904)</text><text x="467.4" y="317.1" textLength="46.6" font-family="Liberation Sans,sans-serif" font-size="6.800" fill="#1410d0" lengthAdjust="spacing">Φ15&#160;&#160;(47.441)</text><text x="455.0" y="369.0" textLength="47.1" font-family="Liberation Sans,sans-serif" font-size="6.800" fill="#1410d0" lengthAdjust="spacing">Φ16&#160;&#160;(35.019)</text><text x="188.2" y="306.6" textLength="46.7" font-family="Liberation Sans,sans-serif" font-size="6.800" fill="#1410d0" lengthAdjust="spacing">Φ17&#160;&#160;(18.853)</text><text x="188.2" y="354.7" textLength="46.1" font-family="Liberation Sans,sans-serif" font-size="6.800" fill="#1410d0" lengthAdjust="spacing">Φ18&#160;&#160;(13.971)</text><text x="193.4" y="395.3" textLength="41.5" font-family="Liberation Sans,sans-serif" font-size="6.800" fill="#1410d0" lengthAdjust="spacing">Φ19&#160;&#160;(4.447)</text><circle cx="171" cy="490" r=".8" fill="#555"/><circle cx="497" cy="186" r=".6" fill="#888"/><rect x="387" y="342" width="62" height="21.700" fill="#0c8a1c"/><text x="404.300" y="354.600" font-family="Liberation Sans,Noto Sans CJK SC,sans-serif" font-size="7.200" font-weight="bold" fill="#fff">1、OK</text></svg></div>
<div id="lp" class="abs">
<div class="abs" style="left:0;top:0;width:119px;height:59px;background:#ebebeb"></div>
<div class="abs" style="left:0;top:30px;width:119px;height:1px;background:#dcdcdc"></div><svg class="abs" style="left:4.5px;top:8.0px" width="16" height="16" viewBox="0 0 16 16"><g fill="#2aa8ea"><path d="M8 0l2.500 3h-5zM8 16l2.500-3h-5zM0 8l3-2.500v5zM16 8l-3-2.500v5z"/><rect x="7" y="2" width="2" height="12"/><rect x="2" y="7" width="12" height="2"/></g></svg><svg class="abs" style="left:27.5px;top:10.0px" width="16" height="14" viewBox="0 0 16 14"><rect x="6" y="5" width="9" height="8.500" fill="#fbf3e0" stroke="#f0d8a0" stroke-width=".8"/><rect x="1" y=".5" width="9" height="8.500" fill="#4aa0e6"/></svg><svg class="abs" style="left:74.0px;top:7.5px" width="17" height="17" viewBox="0 0 17 17"><g transform="scale(.94)"><rect x="7" y="2" width="8.5" height="9.5" fill="#cfe6f4" stroke="#9cc7e4" stroke-width=".6"/>
<path d="M8.5 4h5.5M8.5 5.7h5.5M8.5 7.4h5.5M8.5 9.1h5.5" stroke="#8fbfe0" stroke-width=".6"/>
<path d="M3 2.5V15H15.5M3 15L7 11.5" stroke="#666" stroke-width=".8" fill="none"/>
<path d="M3 1l1.4 2.2H1.6zM17 15l-2.2 1.4v-2.8z" fill="#555"/></g></svg><svg class="abs" style="left:98.5px;top:7.5px" width="17" height="17" viewBox="0 0 17 17"><rect x="4" y="1" width="9" height="8.500" fill="#444"/><rect x="8" y="5.500" width="8.500" height="8.500" fill="#4aa0e6"/><path d="M2 10v3.500h3.500" fill="none" stroke="#f0b050" stroke-width="1"/><path d="M1 11.500l1-1.800 1 1.800z" fill="#f0b050"/></svg><svg class="abs" style="left:3.0px;top:37.0px" width="19" height="14" viewBox="0 0 19 14"><path d="M1 1v5M18 1v5M1 3.500h17" stroke="#8cc8ec" stroke-width=".9" fill="none"/><rect x="1" y="8" width="17" height="4.500" fill="#f0b232"/><path d="M4 8v2M7 8v2M10 8v2M13 8v2M16 8v2" stroke="#fff" stroke-width=".6"/></svg><svg class="abs" style="left:27.5px;top:36.5px" width="16" height="15" viewBox="0 0 16 15"><path d="M2 13.500L8.500 1.500 14.500 13.500z" fill="none" stroke="#999" stroke-width=".8"/><path d="M8.500 1.500L14.500 13.500H2" fill="none" stroke="#d8b070" stroke-width=".8"/><path d="M10.500 13.500a3.500 3.500 0 0 0-1-2.800" fill="none" stroke="#f0a030" stroke-width=".8"/></svg><svg class="abs" style="left:52.5px;top:37.5px" width="13" height="13" viewBox="0 0 13 13"><path d="M1.500 1.500l10 10M11.500 1.500l-10 10" stroke="#5aa6e0" stroke-width="1.100"/><circle cx="6.500" cy="6.500" r="1.800" fill="#2aa8ea"/></svg><svg class="abs" style="left:72.5px;top:33.5px" width="20" height="20" viewBox="0 0 20 20"><path d="M2.500 2.500L17.500 17.500" stroke="#4a9ad8" stroke-width="1.100"/><circle cx="2.500" cy="2.500" r="1.200" fill="#4a9ad8"/><circle cx="17.500" cy="17.500" r="1.200" fill="#4a9ad8"/></svg><svg class="abs" style="left:98.0px;top:34.5px" width="18" height="18" viewBox="0 0 18 18"><circle cx="9" cy="9" r="7.800" fill="none" stroke="#888" stroke-width=".8"/><path d="M8 9h8" stroke="#4cc0c8" stroke-width=".8"/><circle cx="8" cy="9" r="1.400" fill="#30b8c0"/><circle cx="16" cy="9" r="1.400" fill="#30b8c0"/></svg><svg class="abs" style="left:29.0px;top:65.5px" width="10" height="10" viewBox="0 0 10 10"><circle cx="5" cy="5" r="4.300" fill="none" stroke="#a8a8a8" stroke-width=".7"/></svg><svg class="abs" style="left:29.0px;top:88.0px" width="10" height="10" viewBox="0 0 10 10"><circle cx="5" cy="5" r="4.300" fill="none" stroke="#a8a8a8" stroke-width=".7"/></svg><svg class="abs" style="left:29.0px;top:110.4px" width="10" height="10" viewBox="0 0 10 10"><circle cx="5" cy="5" r="4.300" fill="none" stroke="#a8a8a8" stroke-width=".7"/></svg><svg class="abs" style="left:29.0px;top:132.9px" width="10" height="10" viewBox="0 0 10 10"><circle cx="5" cy="5" r="4.300" fill="none" stroke="#a8a8a8" stroke-width=".7"/></svg><svg class="abs" style="left:29.0px;top:155.4px" width="10" height="10" viewBox="0 0 10 10"><circle cx="5" cy="5" r="4.300" fill="none" stroke="#a8a8a8" stroke-width=".7"/></svg><svg class="abs" style="left:29.0px;top:177.9px" width="10" height="10" viewBox="0 0 10 10"><circle cx="5" cy="5" r="4.300" fill="none" stroke="#a8a8a8" stroke-width=".7"/></svg><svg class="abs" style="left:28.5px;top:199.8px" width="11" height="11" viewBox="0 0 11 11"><path d="M1.500 10C1.500 5 5 1.800 9.500 1.800" fill="none" stroke="#56a8c8" stroke-width="1"/><circle cx="9.700" cy="1.800" r=".9" fill="#56a8c8"/><circle cx="1.500" cy="10" r=".7" fill="#56a8c8"/></svg><svg class="abs" style="left:28.5px;top:222.3px" width="11" height="11" viewBox="0 0 11 11"><path d="M1.500 10C1.500 5 5 1.800 9.500 1.800" fill="none" stroke="#56a8c8" stroke-width="1"/><circle cx="9.700" cy="1.800" r=".9" fill="#56a8c8"/><circle cx="1.500" cy="10" r=".7" fill="#56a8c8"/></svg><svg class="abs" style="left:28.5px;top:244.8px" width="11" height="11" viewBox="0 0 11 11"><path d="M1.500 10C1.500 5 5 1.800 9.500 1.800" fill="none" stroke="#56a8c8" stroke-width="1"/><circle cx="9.700" cy="1.800" r=".9" fill="#56a8c8"/><circle cx="1.500" cy="10" r=".7" fill="#56a8c8"/></svg><svg class="abs" style="left:28.5px;top:267.2px" width="11" height="11" viewBox="0 0 11 11"><path d="M1.500 10C1.500 5 5 1.800 9.500 1.800" fill="none" stroke="#56a8c8" stroke-width="1"/><circle cx="9.700" cy="1.800" r=".9" fill="#56a8c8"/><circle cx="1.500" cy="10" r=".7" fill="#56a8c8"/></svg><svg class="abs" style="left:28.5px;top:289.7px" width="11" height="11" viewBox="0 0 11 11"><circle cx="5.500" cy="5.500" r="4.500" fill="none" stroke="#444" stroke-width=".7"/><path d="M2 5.500h7" stroke="#222" stroke-width=".9"/><path d="M1.200 5.500l2.600-1.800v3.600zM9.800 5.500l-2.600-1.800v3.600z" fill="#222"/></svg><svg class="abs" style="left:28.5px;top:312.2px" width="11" height="11" viewBox="0 0 11 11"><circle cx="5.500" cy="5.500" r="4.500" fill="none" stroke="#444" stroke-width=".7"/><path d="M2 5.500h7" stroke="#222" stroke-width=".9"/><path d="M1.200 5.500l2.600-1.800v3.600zM9.800 5.500l-2.600-1.800v3.600z" fill="#222"/></svg><svg class="abs" style="left:28.5px;top:334.6px" width="11" height="11" viewBox="0 0 11 11"><circle cx="5.500" cy="5.500" r="4.500" fill="none" stroke="#444" stroke-width=".7"/><path d="M2 5.500h7" stroke="#222" stroke-width=".9"/><path d="M1.200 5.500l2.600-1.800v3.600zM9.800 5.500l-2.600-1.800v3.600z" fill="#222"/></svg><svg class="abs" style="left:28.5px;top:357.1px" width="11" height="11" viewBox="0 0 11 11"><circle cx="5.500" cy="5.500" r="4.500" fill="none" stroke="#444" stroke-width=".7"/><path d="M2 5.500h7" stroke="#222" stroke-width=".9"/><path d="M1.200 5.500l2.600-1.800v3.600zM9.800 5.500l-2.600-1.800v3.600z" fill="#222"/></svg><svg class="abs" style="left:28.5px;top:379.6px" width="11" height="11" viewBox="0 0 11 11"><circle cx="5.500" cy="5.500" r="4.500" fill="none" stroke="#444" stroke-width=".7"/><path d="M2 5.500h7" stroke="#222" stroke-width=".9"/><path d="M1.200 5.500l2.600-1.800v3.600zM9.800 5.500l-2.600-1.800v3.600z" fill="#222"/></svg><svg class="abs" style="left:28.5px;top:402.0px" width="11" height="11" viewBox="0 0 11 11"><circle cx="5.500" cy="5.500" r="4.500" fill="none" stroke="#444" stroke-width=".7"/><path d="M2 5.500h7" stroke="#222" stroke-width=".9"/><path d="M1.200 5.500l2.600-1.800v3.600zM9.800 5.500l-2.600-1.800v3.600z" fill="#222"/></svg>
<div class="li" style="top:59.00px"><span class="n">1</span><span class="nm">C1</span></div>
<div class="li" style="top:81.47px"><span class="n">2</span><span class="nm">C2</span></div>
<div class="li" style="top:103.94px"><span class="n">3</span><span class="nm">C3</span></div>
<div class="li" style="top:126.41px"><span class="n">4</span><span class="nm">C4</span></div>
<div class="li" style="top:148.88px"><span class="n">5</span><span class="nm">C5</span></div>
<div class="li" style="top:171.35px"><span class="n">6</span><span class="nm">C6</span></div>
<div class="li" style="top:193.82px"><span class="n">7</span><span class="nm">A1</span></div>
<div class="li" style="top:216.29px"><span class="n">8</span><span class="nm">A2</span></div>
<div class="li" style="top:238.76px"><span class="n">9</span><span class="nm">A3</span></div>
<div class="li" style="top:261.23px"><span class="n">10</span><span class="nm">A4</span></div>
<div class="li" style="top:283.70px"><span class="n">11</span><span class="nm">Φ14(C3)</span></div>
<div class="li" style="top:306.17px"><span class="n">12</span><span class="nm">Φ15(C2)</span></div>
<div class="li" style="top:328.64px"><span class="n">13</span><span class="nm">Φ16(C1)</span></div>
<div class="li" style="top:351.11px"><span class="n">14</span><span class="nm">Φ17(C6)</span></div>
<div class="li" style="top:373.58px"><span class="n">15</span><span class="nm">Φ18(C5)</span></div>
<div class="li" style="top:396.05px"><span class="n">16</span><span class="nm">Φ19(C4)</span></div>
</div>
<div id="rp" class="abs"><div class="abs" style="left:2.0px;top:3.5px;width:34.0px;height:20.0px;background:#18b2ee"></div><span class="t c" style="left:19.0px;top:9.0px;font-size:9px;color:#fff">数量:</span><span class="t" style="left:45.0px;top:8.5px;font-size:9px;color:#777">1</span><div class="abs" style="left:85.0px;top:3.5px;width:30.5px;height:20.0px;background:#0b7a10"></div><span class="t c" style="left:100.3px;top:8.5px;font-size:9.5px;color:#fff">OK:</span><span class="t" style="left:124.0px;top:8.5px;font-size:9px;color:#1a8a1a">1</span><div class="abs" style="left:0.0px;top:29.0px;width:258.0px;height:111.0px;background:#f0f0f0;border:1px solid #dadada"></div><div class="abs" style="left:1.0px;top:30.0px;width:256.0px;height:16.5px;background:#dcdcdc"></div><span class="t" style="left:4.5px;top:35.0px;font-size:7.5px;color:#111">元素属性</span><svg class="abs" style="left:239.5px;top:32.5px" width="11" height="11" viewBox="0 0 12 12"><g fill="#1e8ee0"><circle cx="6" cy="6" r="4"/><rect x="5" y="0.500" width="2" height="11" rx=".4"/><rect x="5" y="0.500" width="2" height="11" rx=".4" transform="rotate(45 6 6)"/><rect x="5" y="0.500" width="2" height="11" rx=".4" transform="rotate(90 6 6)"/><rect x="5" y="0.500" width="2" height="11" rx=".4" transform="rotate(135 6 6)"/></g><circle cx="6" cy="6" r="2" fill="#dcdcdc"/></svg><div class="abs" style="left:1.0px;top:46.5px;width:256.0px;height:16.5px;background:#fff;border-bottom:1px solid #d5d5d5"></div><span class="t" style="left:5.0px;top:52.6px;font-size:6.800px;color:#333">元素</span><span class="t" style="left:38.5px;top:52.6px;font-size:6.800px;color:#333">类型</span><div class="abs" style="left:34.5px;top:47.5px;width:1.0px;height:14.5px;background:#e3e3e3"></div><span class="t" style="left:82.5px;top:52.6px;font-size:6.800px;color:#333">测量值</span><div class="abs" style="left:78.5px;top:47.5px;width:1.0px;height:14.5px;background:#e3e3e3"></div><span class="t" style="left:125.0px;top:52.6px;font-size:6.800px;color:#333">名义值</span><div class="abs" style="left:121.0px;top:47.5px;width:1.0px;height:14.5px;background:#e3e3e3"></div><span class="t" style="left:163.0px;top:52.6px;font-size:6.800px;color:#333">上公差</span><div class="abs" style="left:159.0px;top:47.5px;width:1.0px;height:14.5px;background:#e3e3e3"></div><span class="t" style="left:201.0px;top:52.6px;font-size:6.800px;color:#333">下公差</span><div class="abs" style="left:197.0px;top:47.5px;width:1.0px;height:14.5px;background:#e3e3e3"></div><span class="t" style="left:240.0px;top:52.6px;font-size:6.800px;color:#333">偏差</span><div class="abs" style="left:236.0px;top:47.5px;width:1.0px;height:14.5px;background:#e3e3e3"></div><div class="abs" style="left:1.0px;top:63.5px;width:256.0px;height:13.5px;background:#fff;border-bottom:1px solid #dedede"></div><div class="abs" style="left:1.0px;top:63.5px;width:33.5px;height:13.5px;background:#0c6fd2"></div><span class="t" style="left:2.5px;top:68.0px;font-size:6.500px;color:#fff">Φ19</span><span class="t" style="left:37.0px;top:68.0px;font-size:6.500px;color:#111">直径</span><div class="abs" style="left:34.5px;top:63.5px;width:1.0px;height:13.5px;background:#d8d8d8"></div><span class="t" style="left:81.0px;top:68.0px;font-size:6.500px;color:#111">4.447</span><div class="abs" style="left:78.5px;top:63.5px;width:1.0px;height:13.5px;background:#d8d8d8"></div><span class="t" style="left:123.5px;top:68.0px;font-size:6.500px;color:#111">4.447</span><div class="abs" style="left:121.0px;top:63.5px;width:1.0px;height:13.5px;background:#d8d8d8"></div><span class="t" style="left:161.5px;top:68.0px;font-size:6.500px;color:#111">0.005</span><div class="abs" style="left:159.0px;top:63.5px;width:1.0px;height:13.5px;background:#d8d8d8"></div><span class="t" style="left:199.5px;top:68.0px;font-size:6.500px;color:#111">-0.005</span><div class="abs" style="left:197.0px;top:63.5px;width:1.0px;height:13.5px;background:#d8d8d8"></div><span class="t" style="left:238.5px;top:68.0px;font-size:6.500px;color:#111">0.000</span><div class="abs" style="left:236.0px;top:63.5px;width:1.0px;height:13.5px;background:#d8d8d8"></div><div class="abs" style="left:1.0px;top:128.5px;width:256.0px;height:9.5px;background:#f3f3f3"></div><div class="abs" style="left:10.0px;top:128.5px;width:185.5px;height:9.5px;background:#cdcdcd"></div><svg class="abs" style="left:3.0px;top:130.3px" width="5" height="6" viewBox="0 0 5 6"><path d="M3.800 .8L1.400 3l2.400 2.200" fill="none" stroke="#555" stroke-width="1"/></svg><svg class="abs" style="left:249.0px;top:130.3px" width="5" height="6" viewBox="0 0 5 6"><path d="M1.200 .8L3.600 3 1.200 5.200" fill="none" stroke="#555" stroke-width="1"/></svg><div class="abs" style="left:0.0px;top:142.0px;width:258.0px;height:309.0px;background:#f0f0f0;border:1px solid #dadada"></div><div class="abs" style="left:1.0px;top:143.0px;width:256.0px;height:17.0px;background:#dcdcdc"></div><span class="t" style="left:4.5px;top:147.5px;font-size:7.500px;color:#111">管控属性</span><div class="abs" style="left:1.0px;top:160.0px;width:256.0px;height:17.0px;background:#fff;border-bottom:1px solid #d5d5d5"></div><span class="t" style="left:5.0px;top:166.3px;font-size:6.800px;color:#333">元素</span><span class="t" style="left:38.5px;top:166.3px;font-size:6.800px;color:#333">类型</span><div class="abs" style="left:34.5px;top:161.0px;width:1.0px;height:15.0px;background:#e3e3e3"></div><span class="t" style="left:82.5px;top:166.3px;font-size:6.800px;color:#333">测量值</span><div class="abs" style="left:78.5px;top:161.0px;width:1.0px;height:15.0px;background:#e3e3e3"></div><span class="t" style="left:125.0px;top:166.3px;font-size:6.800px;color:#333">名义值</span><div class="abs" style="left:121.0px;top:161.0px;width:1.0px;height:15.0px;background:#e3e3e3"></div><span class="t" style="left:163.0px;top:166.3px;font-size:6.800px;color:#333">上公差</span><div class="abs" style="left:159.0px;top:161.0px;width:1.0px;height:15.0px;background:#e3e3e3"></div><span class="t" style="left:201.0px;top:166.3px;font-size:6.800px;color:#333">下公差</span><div class="abs" style="left:197.0px;top:161.0px;width:1.0px;height:15.0px;background:#e3e3e3"></div><span class="t" style="left:240.0px;top:166.3px;font-size:6.800px;color:#333">偏差</span><div class="abs" style="left:236.0px;top:161.0px;width:1.0px;height:15.0px;background:#e3e3e3"></div><div class="abs" style="left:1.0px;top:439.5px;width:256.0px;height:9.5px;background:#f3f3f3"></div><div class="abs" style="left:10.0px;top:439.5px;width:185.5px;height:9.5px;background:#cdcdcd"></div><svg class="abs" style="left:3.0px;top:441.3px" width="5" height="6" viewBox="0 0 5 6"><path d="M3.800 .8L1.400 3l2.400 2.200" fill="none" stroke="#555" stroke-width="1"/></svg><svg class="abs" style="left:249.0px;top:441.3px" width="5" height="6" viewBox="0 0 5 6"><path d="M1.200 .8L3.600 3 1.200 5.200" fill="none" stroke="#555" stroke-width="1"/></svg><div class="abs" style="left:1.5px;top:457.0px;width:85.5px;height:27.5px;background:#e1e1e1;border:1px solid #c9c9c9"></div><span class="t c" style="left:44.0px;top:465.0px;font-size:11.500px;color:#3c9cea;letter-spacing:.5px">测量</span><svg class="abs" style="left:97.0px;top:459.5px" width="20" height="20" viewBox="0 0 20 20"><circle cx="10" cy="10" r="8.500" fill="#fafcff" stroke="#6aaef0" stroke-width=".9"/><circle cx="10" cy="10" r="3.300" fill="#eef5fd" stroke="#9cc8f4" stroke-width=".8"/><circle cx="10" cy="10" r="1.300" fill="#cfe3f8"/></svg><div class="abs" style="left:124.0px;top:466.0px;width:115.0px;height:1.5px;background:#dadada"></div><div class="abs" style="left:125.0px;top:473.3px;width:112px;height:0;border-top:1.500px dotted #bdbdbd"></div><svg class="abs" style="left:144.2px;top:461.5px" width="7" height="11" viewBox="0 0 7 11"><path d="M.500 .500h6v7L3.500 10.500.500 7.500z" fill="#1565c8"/></svg><span class="t c" style="left:249.0px;top:468.0px;font-size:6px;color:#222">30</span><span class="t c" style="left:249.0px;top:457.0px;font-size:7px;color:#333">•</span><span class="t c" style="left:249.0px;top:478.0px;font-size:7px;color:#333">-</span></div>
<div id="status" class="abs"><span class="t" style="left:4.0px;top:6px;font-size:6.800px;color:#222;">当前程序:</span><span class="t" style="left:45.0px;top:6px;font-size:6.800px;color:#222;">无</span><span class="t" style="left:58.0px;top:6px;font-size:6.800px;color:#222;color:#666">|</span><span class="t" style="left:64.0px;top:6px;font-size:6.800px;color:#222;">重复</span><div class="abs" style="left:79px;top:3.500px;width:15px;height:11px;background:#fff"></div><span class="t" style="left:81.5px;top:6px;font-size:6.800px;color:#222;">1</span><span class="t" style="left:97.0px;top:6px;font-size:6.800px;color:#222;">次, 当前</span><span class="t" style="left:131.5px;top:6px;font-size:6.800px;color:#222;">1/1</span><div class="abs" style="left:146px;top:3px;width:39.500px;height:12.500px;background:#d9d9dd;border:1px solid #777"></div><span class="t" style="left:148.5px;top:6px;font-size:6.800px;color:#222;">显示OK/NG</span><span class="t" style="left:189.0px;top:6px;font-size:6.800px;color:#222;">清屏</span><span class="t" style="left:210.0px;top:6px;font-size:6.800px;color:#222;">普通边</span><span class="t" style="left:243.0px;top:6px;font-size:6.800px;color:#222;">实时显示</span><svg class="abs" style="left:231.500px;top:8.500px" width="4" height="3" viewBox="0 0 4 3"><path d="M0 0h4L2 2.500z" fill="#222"/></svg><svg class="abs" style="left:271.500px;top:8.500px" width="4" height="3" viewBox="0 0 4 3"><path d="M0 0h4L2 2.500z" fill="#222"/></svg><div class="abs" style="left:1024.500px;top:3px;width:1px;height:12px;background:#c8c8cc"></div><span class="t" style="left:1031.0px;top:6px;font-size:6.800px;color:#222;">627</span><span class="t" style="left:1048.5px;top:6px;font-size:6.800px;color:#222;">14.71/s</span></div>
<div id="task" class="abs"><svg class="abs" style="left:7px;top:6px" width="11" height="11" viewBox="0 0 11 11" fill="#fff"><path d="M0 1.600L4.600 1v4.200H0zM5.200 .9L11 0v5.200H5.200zM0 5.800h4.600V10L0 9.400zM5.200 5.800H11V11l-5.800-.900z"/></svg><div class="abs" style="left:27.500px;top:1px;width:191px;height:22px;background:#f2f2f2"></div><svg class="abs" style="left:32px;top:6px" width="12" height="12" viewBox="0 0 12 12"><circle cx="6" cy="6" r="4.600" fill="none" stroke="#222" stroke-width="1.300"/></svg><span class="t" style="left:50px;top:8.500px;font-size:7.500px;color:#444">在此键入进行搜索</span><svg class="abs" style="left:204px;top:6px" width="8" height="12" viewBox="0 0 8 12" fill="none" stroke="#444" stroke-width=".8"><rect x="2.600" y="1" width="2.800" height="6" rx="1.400"/><path d="M1.200 5.500a2.800 2.800 0 0 0 5.600 0M4 8.500V10.500M2.500 10.500h3"/></svg><svg class="abs" style="left:227px;top:6px" width="12" height="12" viewBox="0 0 12 12" fill="none" stroke="#fff" stroke-width="1"><rect x="2.500" y="3" width="7" height="6"/><path d="M.500 2v8M11.500 2v8"/></svg><span class="t" style="left:255.500px;top:1.500px;font-size:19px;font-weight:bold;color:#1e8ae6;font-family:'Liberation Sans',sans-serif">e</span><svg class="abs" style="left:283px;top:5px" width="15" height="13" viewBox="0 0 15 13"><path d="M.500 1.500h5l1 1.200h8V12H.500z" fill="#f2c84e"/><path d="M.500 4h14v8H.500z" fill="#f7dc7c"/><rect x="3" y="7" width="9" height="5" fill="#7ab8e6"/><rect x="4.500" y="9" width="6" height="3" fill="#f7dc7c"/></svg><div class="abs" style="left:304px;top:0;width:27px;height:23px;background:#39424f;border-bottom:1.500px solid #8ab4e8"></div><svg class="abs" style="left:311px;top:5px" width="13" height="13" viewBox="0 0 10 10"><circle cx="5" cy="5" r="5" fill="#1d3c8c"/><rect x="2.600" y="2.500" width="1.600" height="5" fill="#fff"/><rect x="5.800" y="2.500" width="1.600" height="5" fill="#fff"/><rect x="3.500" y="4.300" width="3" height="1.300" fill="#fff"/></svg><svg class="abs" style="left:338px;top:4px" width="14" height="16" viewBox="0 0 14 16"><path d="M7 15.500L2 8a5.800 5.800 0 1 1 10 0z" fill="#e04a8a"/><path d="M7 1.200a5.800 5.800 0 0 1 5 6.800L7 8z" fill="#f0a030"/><path d="M7 1.200A5.800 5.800 0 0 0 2 8l5 0z" fill="#3aa0e8"/><path d="M2 8l5 7.500V8z" fill="#7a4ad0"/><circle cx="7" cy="6.500" r="2" fill="#fff" opacity=".85"/></svg><svg class="abs" style="left:935px;top:6px" width="12" height="12" viewBox="0 0 12 12" fill="none" stroke="#fff" stroke-width=".9"><circle cx="4.500" cy="5" r="1.800"/><path d="M1 11c.3-2.500 1.500-3.600 3.500-3.600s3.200 1.100 3.500 3.600"/><circle cx="8.800" cy="3" r="1.300"/><path d="M8.800 4.300c1.500 0 2.300.8 2.500 2.200"/></svg><svg class="abs" style="left:957px;top:8px" width="9" height="7" viewBox="0 0 9 7" fill="none" stroke="#fff" stroke-width="1"><path d="M1 5.500L4.500 1.800 8 5.500"/></svg><svg class="abs" style="left:969px;top:6px" width="12" height="12" viewBox="0 0 12 12"><rect x="2" y="2" width="8.500" height="6.500" fill="none" stroke="#fff" stroke-width="1"/><path d="M1 10.500h4" stroke="#fff" stroke-width="1"/><rect x="6" y="6" width="5" height="5" fill="#e03a3a"/><path d="M7.200 7.200l2.600 2.600M9.800 7.200L7.200 9.800" stroke="#fff" stroke-width=".8"/></svg><svg class="abs" style="left:983px;top:6px" width="12" height="12" viewBox="0 0 12 12" fill="none" stroke="#fff" stroke-width=".9"><path d="M1 4.500h2L5.500 2v8L3 7.500H1z" fill="#fff"/><path d="M7 4.300a2.500 2.500 0 0 1 0 3.400M8.500 3a4.300 4.300 0 0 1 0 6M10 1.800a6 6 0 0 1 0 8.400"/></svg><span class="t" style="left:997px;top:7.500px;font-size:8.500px;color:#fff">英</span><span class="t c" style="left:1027px;top:3.500px;font-size:6.800px;color:#fff">15:47</span><span class="t c" style="left:1027px;top:13.300px;font-size:7.300px;color:#fff">2019/1/14</span><svg class="abs" style="left:1053px;top:5px" width="14" height="14" viewBox="0 0 14 14"><path d="M1.500 1.500h9.500v7H5.500L3.500 10.500V8.500H1.500z" fill="#fff"/><path d="M3 3.500h6.500M3 5.200h6.500" stroke="#333" stroke-width=".6"/><circle cx="10.500" cy="10" r="3" fill="#222" stroke="#ccc" stroke-width=".6"/><text x="10.500" y="11.800" font-size="4.800" fill="#fff" text-anchor="middle" font-family="Liberation Sans,sans-serif">3</text></svg></div>
</body></html>
